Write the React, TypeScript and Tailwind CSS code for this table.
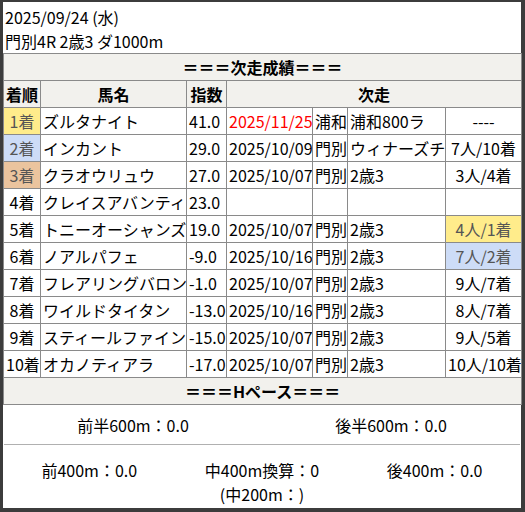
import React from "react";

type Row = {
  rank: string;
  name: string;
  score: string;
  date?: string;
  red?: boolean;
  venue?: string;
  race?: string;
  result?: string;
};

const rows: Row[] = [
  { rank: "1着", name: "ズルタナイト", score: "41.0", date: "2025/11/25", red: true, venue: "浦和", race: "浦和800ラ", result: "----" },
  { rank: "2着", name: "インカント", score: "29.0", date: "2025/10/09", venue: "門別", race: "ウィナーズチ", result: "7人/10着" },
  { rank: "3着", name: "クラオウリュウ", score: "27.0", date: "2025/10/07", venue: "門別", race: "2歳3", result: "3人/4着" },
  { rank: "4着", name: "クレイスアバンティ", score: "23.0" },
  { rank: "5着", name: "トニーオーシャンズ", score: "19.0", date: "2025/10/07", venue: "門別", race: "2歳3", result: "4人/1着" },
  { rank: "6着", name: "ノアルパフェ", score: "-9.0", date: "2025/10/16", venue: "門別", race: "2歳3", result: "7人/2着" },
  { rank: "7着", name: "フレアリングバロン", score: "-1.0", date: "2025/10/07", venue: "門別", race: "2歳3", result: "9人/7着" },
  { rank: "8着", name: "ワイルドタイタン", score: "-13.0", date: "2025/10/16", venue: "門別", race: "2歳3", result: "8人/7着" },
  { rank: "9着", name: "スティールファイン", score: "-15.0", date: "2025/10/07", venue: "門別", race: "2歳3", result: "9人/5着" },
  { rank: "10着", name: "オカノティアラ", score: "-17.0", date: "2025/10/07", venue: "門別", race: "2歳3", result: "10人/10着" },
];

const rankBg: Record<string, string> = {
  "1着": "bg-[#ffec8b] text-[#555]",
  "2着": "bg-[#cddcf7] text-[#555]",
  "3着": "bg-[#ebc49e] text-[#555]",
};

const resultBg = (r?: string) => {
  if (!r) return "";
  if (r.endsWith("/1着")) return "bg-[#ffec8b] text-[#555]";
  if (r.endsWith("/2着")) return "bg-[#cddcf7] text-[#555]";
  return "";
};

const td = "border border-[#8a8a8a] h-[27px] px-[2px] p-0 whitespace-nowrap overflow-hidden leading-[26px]";

export default function App() {
  return (
    <div
      className="w-[525px] h-[512px] bg-[#3c3c3c] pt-[2px] pl-[3px] pr-[4px] pb-[4px] text-[16px] text-black"
      style={{ fontFamily: '"Noto Sans CJK JP", "Noto Sans", sans-serif' }}
    >
      <div className="h-full bg-white flex flex-col">
        <div className="pt-[3px] pl-[2px] leading-[24px]">
          <div>2025/09/24 (水)</div>
          <div>門別4R 2歳3 ダ1000m</div>
        </div>

        <table className="table-fixed border-collapse w-[518px]">
          <colgroup>
            <col className="w-[37px]" />
            <col className="w-[146px]" />
            <col className="w-[40px]" />
            <col className="w-[86px]" />
            <col className="w-[35px]" />
            <col className="w-[98px]" />
            <col className="w-[76px]" />
          </colgroup>
          <tbody>
            <tr className="bg-[#f2f1ed]">
              <td colSpan={7} className={`${td} text-center font-bold`}>
                ＝＝＝次走成績＝＝＝
              </td>
            </tr>
            <tr className="bg-[#f2f1ed] font-bold">
              <td className={`${td} text-center`}>着順</td>
              <td className={`${td} text-center`}>馬名</td>
              <td className={`${td} text-center`}>指数</td>
              <td colSpan={4} className={`${td} text-center`}>次走</td>
            </tr>
            {rows.map((r) => (
              <tr key={r.rank}>
                <td className={`${td} text-center ${rankBg[r.rank] ?? ""}`}>{r.rank}</td>
                <td className={td}>{r.name}</td>
                <td className={td}>{r.score}</td>
                <td className={`${td} ${r.red ? "text-[#ff0000]" : ""}`}>{r.date}</td>
                <td className={td}>{r.venue}</td>
                <td className={td}>{r.race}</td>
                <td className={`${td} text-center ${resultBg(r.result)}`}>{r.result}</td>
              </tr>
            ))}
            <tr className="bg-[#f2f1ed]">
              <td colSpan={7} className={`${td} text-center font-bold`}>
                ＝＝＝Hペース＝＝＝
              </td>
            </tr>
          </tbody>
        </table>

        <div className="grid grid-cols-2 h-[40px] items-center leading-[24px] border-b border-[#b0b0b0] mx-[1px]">
          <div className="text-center">前半600m：0.0</div>
          <div className="text-center">後半600m：0.0</div>
        </div>
        <div className="grid grid-cols-3 pt-[13px] leading-[24px]">
          <div className="text-center">前400m：0.0</div>
          <div className="text-center">
            中400m換算：0
            <br />
            (中200m：)
          </div>
          <div className="text-center">後400m：0.0</div>
        </div>
      </div>
    </div>
  );
}
